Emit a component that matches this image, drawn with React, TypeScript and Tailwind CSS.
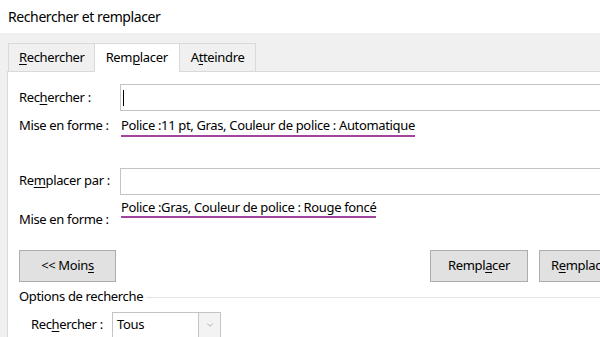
import { ChevronDown } from "lucide-react";

// "Rechercher et remplacer" dialog, Remplacer tab

function Acc({ children }: { children: string }) {
  return <span className="underline underline-offset-2 decoration-1">{children}</span>;
}

function Tab({ active, className, children }: { active?: boolean; className: string; children: React.ReactNode }) {
  return (
    <div
      className={
        active
          ? `h-[29px] -ml-px flex items-center bg-white border border-b-0 border-[#d9d9d9] -mb-px relative z-10 ${className}`
          : `h-[28px] -ml-px first:ml-0 flex items-center bg-[#f0f0f0] border border-b-0 border-[#d9d9d9] ${className}`
      }
    >
      {children}
    </div>
  );
}

function Btn({ className, children }: { className: string; children: React.ReactNode }) {
  return (
    <div
      className={`h-[32px] shrink-0 whitespace-nowrap flex items-center justify-center bg-[#e1e1e1] border border-[#adadad] ${className}`}
    >
      {children}
    </div>
  );
}

export default function App() {
  return (
    <div
      className="w-[600px] h-[337px] overflow-hidden bg-white text-black text-[13px] tracking-[-0.35px]"
      style={{ fontFamily: '"Noto Sans", "Open Sans", sans-serif' }}
    >
      {/* title */}
      <div className="h-[33px] flex items-center pl-2 text-[14px] tracking-[-0.4px] text-black">
        Rechercher et remplacer
      </div>

      {/* tabs strip */}
      <div className="h-[38px] bg-[#f0f0f0] flex items-end pl-2">
        <Tab className="pl-[10px] pr-[9px]">
          <Acc>R</Acc>echercher
        </Tab>
        <Tab active className="px-[11px]">
          Rem<Acc>p</Acc>lacer
        </Tab>
        <Tab className="px-[11px]">
          A<Acc>t</Acc>teindre
        </Tab>
      </div>

      <div className="flex">
        <div className="w-[7px] shrink-0 bg-[#f0f0f0]" />
        <div className="flex-1 min-w-0 h-[266px] border-l border-t border-[#d9d9d9] bg-white pl-[11px] pt-[12px]">
          {/* Rechercher */}
          <div className="flex items-center h-[27px]">
            <div className="w-[101px] shrink-0">
              Rec<Acc>h</Acc>ercher :
            </div>
            <div className="h-[27px] w-[520px] shrink-0 border border-[#c4c4c4] flex items-center pl-[2px]">
              <div className="w-px h-[16px] bg-black" />
            </div>
          </div>
          <div className="flex items-start h-[56px] pt-[5px]">
            <div className="w-[102px] shrink-0">Mise en forme :</div>
            <div className="border-b-2 border-[#a0449f] leading-[19px]">
              Police :11 pt, Gras, Couleur de police : Automatique
            </div>
          </div>

          {/* Remplacer par */}
          <div className="flex items-center h-[28px]">
            <div className="w-[101px] shrink-0">
              Re<Acc>m</Acc>placer par :
            </div>
            <div className="h-[27px] w-[520px] shrink-0 border border-[#c4c4c4]" />
          </div>
          <div className="flex items-start h-[55px] pt-[3px]">
            <div className="w-[102px] shrink-0 pt-[12px]">Mise en forme :</div>
            <div className="border-b-2 border-[#a0449f] leading-[18px]">
              Police :Gras, Couleur de police : Rouge foncé
            </div>
          </div>

          {/* buttons */}
          <div className="flex">
            <Btn className="w-[97px]">
              &lt;&lt; Moin<Acc>s</Acc>
            </Btn>
            <Btn className="w-[98px] ml-[314px]">
              Rempl<Acc>a</Acc>cer
            </Btn>
            <Btn className="w-[98px] ml-[11px] justify-start pl-[11px]">
              R<Acc>e</Acc>mplacer tout
            </Btn>
          </div>

          {/* options */}
          <div className="flex items-center h-[30px]">
            <span className="pr-[3px]">Options de recherche</span>
            <div className="flex-1 h-px bg-[#e3e3e3]" />
          </div>
          <div className="flex items-center pl-[12px]">
            <div className="w-[81px] shrink-0">
              Rec<Acc>h</Acc>ercher :
            </div>
            <div className="h-[26px] w-[109px] flex border border-[#c4c4c4]">
              <div className="flex-1 pl-[4px] flex items-center">Tous</div>
              <div className="w-[22px] bg-[#f3f3f3] border-l border-[#c4c4c4] flex items-center justify-center text-[#8a8a8a]">
                <ChevronDown size={10} strokeWidth={1.5} />
              </div>
            </div>
          </div>
        </div>
      </div>
    </div>
  );
}
